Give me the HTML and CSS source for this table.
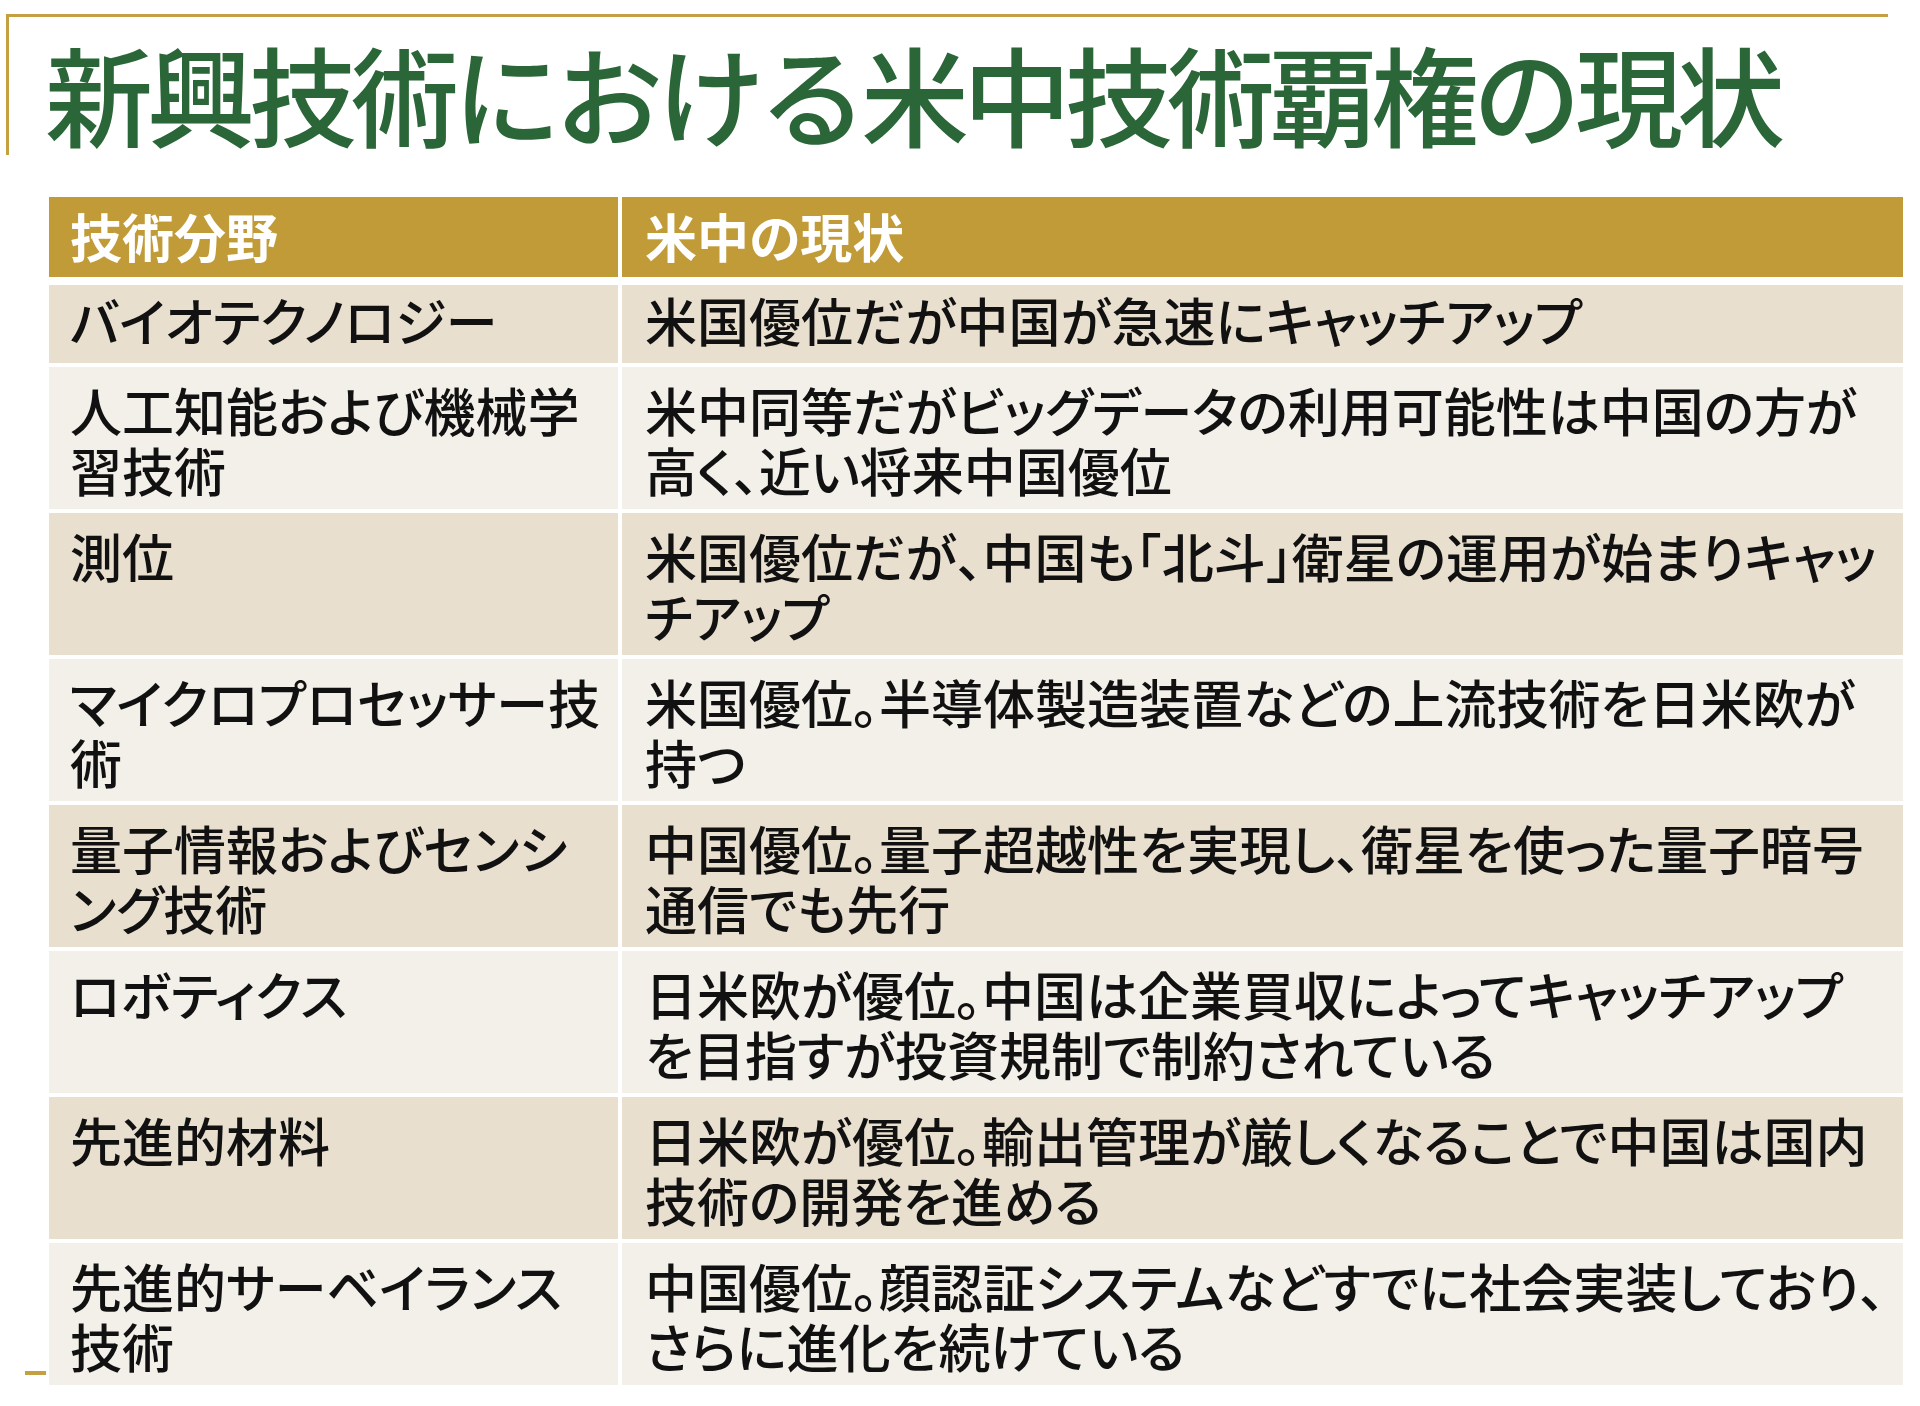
FILE: index.html
```html
<!DOCTYPE html>
<html lang="ja">
<head>
<meta charset="utf-8">
<title>新興技術における米中技術覇権の現状</title>
<link rel="stylesheet" href="styles.css">
</head>
<body>
<div class="slide">
  <div class="frame">
    <h1 class="title">新興技術における米中技術覇権の現状</h1>
  </div>
  <div class="table">
    <div class="row head">
      <div class="cell">技術分野</div>
      <div class="cell">米中の現状</div>
    </div>
    <div class="row short dark">
      <div class="cell">バイオテクノロジー</div>
      <div class="cell">米国優位だが中国が急速にキャッチアップ</div>
    </div>
    <div class="row light">
      <div class="cell">人工知能および機械学<br>習技術</div>
      <div class="cell">米中同等だがビッグデータの利用可能性は中国の方が<br>高く<span class="p">、</span>近い将来中国優位</div>
    </div>
    <div class="row dark">
      <div class="cell">測位</div>
      <div class="cell">米国優位だが<span class="p">、</span>中国も<span class="p">「</span>北斗<span class="p">」</span>衛星の運用が始まりキャッ<br>チアップ</div>
    </div>
    <div class="row light">
      <div class="cell">マイクロプロセッサー技<br>術</div>
      <div class="cell">米国優位<span class="p">。</span>半導体製造装置などの上流技術を日米欧が<br>持つ</div>
    </div>
    <div class="row dark">
      <div class="cell">量子情報およびセンシ<br>ング技術</div>
      <div class="cell">中国優位<span class="p">。</span>量子超越性を実現し<span class="p">、</span>衛星を使った量子暗号<br>通信でも先行</div>
    </div>
    <div class="row light">
      <div class="cell">ロボティクス</div>
      <div class="cell">日米欧が優位<span class="p">。</span>中国は企業買収によってキャッチアップ<br>を目指すが投資規制で制約されている</div>
    </div>
    <div class="row dark">
      <div class="cell">先進的材料</div>
      <div class="cell">日米欧が優位<span class="p">。</span>輸出管理が厳しくなることで中国は国内<br>技術の開発を進める</div>
    </div>
    <div class="row light">
      <div class="cell">先進的サーベイランス<br>技術</div>
      <div class="cell">中国優位<span class="p">。</span>顔認証システムなどすでに社会実装しており<span class="p">、</span><br>さらに進化を続けている</div>
    </div>
  </div>
  <div class="dash"></div>
</div>
</body>
</html>
```

FILE: styles.css
```css
html, body {
  margin: 0;
  padding: 0;
  background: #ffffff;
}

.slide {
  position: relative;
  width: 1920px;
  height: 1406px;
  overflow: hidden;
  font-family: "Noto Sans CJK JP", "Noto Sans", sans-serif;
}

.frame {
  margin: 14px 0 0 6px;
  width: 1879px;
  height: 138px;
  border-top: 3px solid #c4a043;
  border-left: 3px solid #c4a043;
  box-sizing: content-box;
}

.title {
  margin: 0;
  padding: 15px 0 0 36px;
  font-size: 108px;
  line-height: 120px;
  font-weight: 500;
  letter-spacing: -6px;
  color: #2a6637;
  white-space: nowrap;
}

.table {
  margin: 42px 0 0 49px;
  width: 1854px;
  display: flex;
  flex-direction: column;
  gap: 4px;
}

.row {
  display: grid;
  grid-template-columns: 569px 1281px;
  column-gap: 4px;
  height: 142px;
}

.row.head {
  height: 80px;
  margin-bottom: 4px;
}

.row.short {
  height: 78px;
}

.cell {
  box-sizing: border-box;
  padding: 13px 0 0 21px;
  font-size: 52px;
  line-height: 60px;
  font-weight: 500;
  letter-spacing: 0;
  font-feature-settings: "palt";
  color: #111111;
  white-space: nowrap;
}

.cell + .cell {
  padding-left: 23px;
}

.head .cell {
  background: #c19b37;
  color: #ffffff;
  font-weight: 700;
  padding-top: 9px;
}

.short .cell {
  padding-top: 5px;
}

.dark .cell {
  background: #e9dfcf;
}

.light .cell {
  background: #f3efe9;
}

.p {
  font-feature-settings: "halt";
}

.dash {
  position: absolute;
  left: 25px;
  top: 1371px;
  width: 21px;
  height: 4px;
  background: #c4a043;
}
```
